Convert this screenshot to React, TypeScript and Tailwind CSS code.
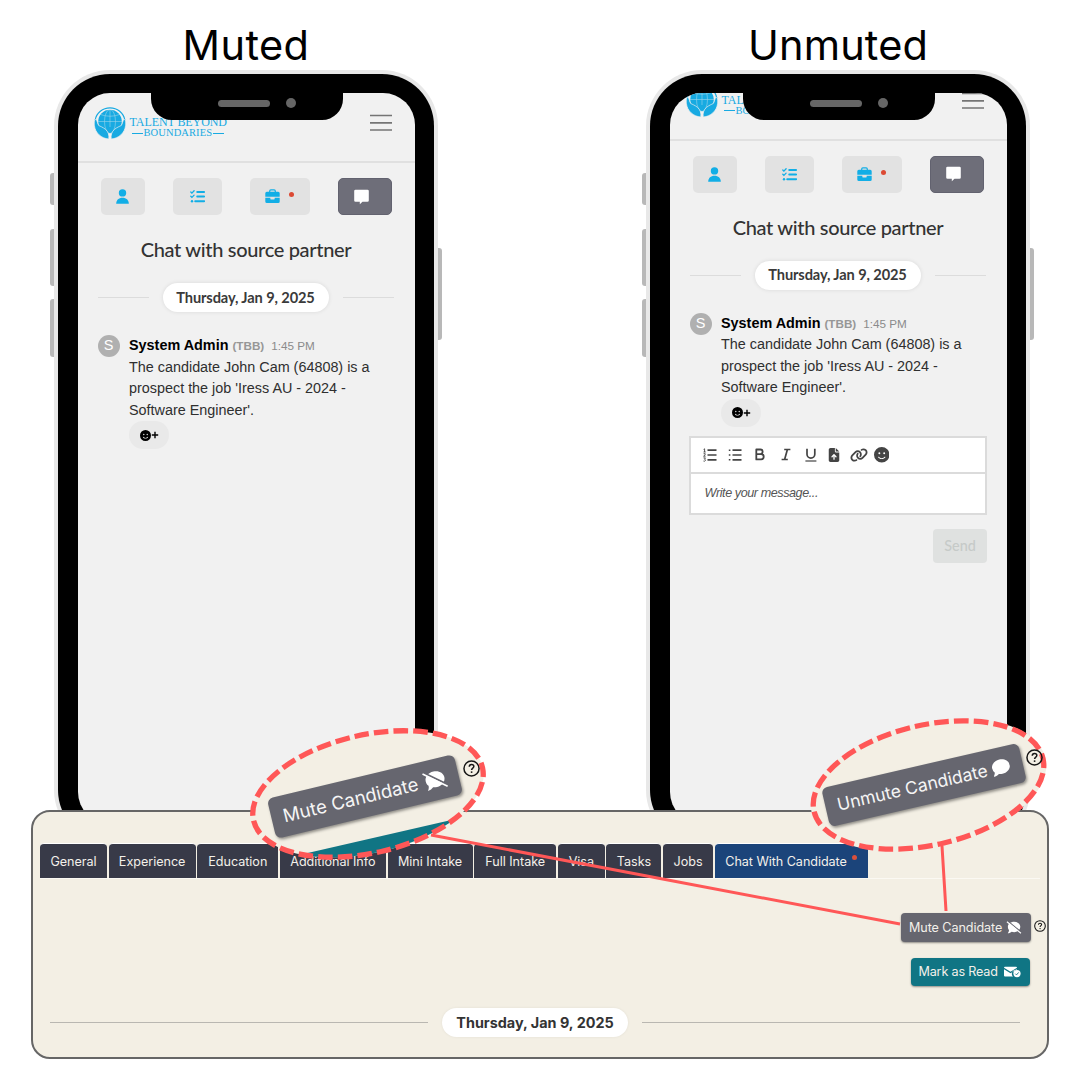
import React from "react";
import { FaLink, FaFaceSmile, FaFileArrowUp, FaComment } from "react-icons/fa6";

function Logo() {
  return (
    <div className="flex items-start text-[#18aae2]">
      <svg width="32" height="33" viewBox="0 0 32 33" className="shrink-0">
        <path d="M1.200 13 A15 14.500 0 0 1 30.800 13" fill="none" stroke="#18aae2" strokeWidth="1.200" />
        <circle cx="16" cy="14.5" r="11.8" fill="#18aae2" />
        <g fill="none" stroke="#f1f1f1" strokeWidth="0.600" opacity="0.600">
          <ellipse cx="16" cy="14.5" rx="5.5" ry="12" />
          <path d="M16 2V20M4 14.5H28M6.5 7.5Q16 11 25.5 7.5" />
        </g>
        <path d="M1.800 12.500C.300 12.500 .100 15 .400 18.500C1.200 26 7.500 31.500 14.800 32C15.400 28 14 24.500 11.500 22.300C8.500 20 6.500 19.500 4.800 18.500C3.500 17.300 3.300 13 1.800 12.500Z" fill="#18aae2" stroke="#f1f1f1" strokeWidth="0.700" />
        <path d="M30.200 12.500C31.700 12.500 31.900 15 31.600 18.500C30.800 26 24.500 31.500 17.200 32C16.600 28 18 24.500 20.500 22.300C23.500 20 25.500 19.500 27.200 18.500C28.500 17.300 28.700 13 30.200 12.500Z" fill="#18aae2" stroke="#f1f1f1" strokeWidth="0.700" />
      </svg>
      <div className="ml-1 mt-[8px] w-[97px] font-['Liberation_Serif']">
        <div className="whitespace-nowrap text-[12px] leading-[14px] tracking-[-0.080px]">TALENT BEYOND</div>
        <div className="mt-[-2px] flex items-center whitespace-nowrap text-[10.500px] leading-[12px] tracking-[0.100px]">
          <span className="ml-[2px] mr-px h-px w-[11px] bg-[#18aae2]" />
          BOUNDARIES
          <span className="ml-px h-px w-[11px] bg-[#18aae2]" />
        </div>
      </div>
    </div>
  );
}

function NavTabs() {
  return (
    <div className="ml-[23px] mt-[15px] flex h-[37px] text-[#12aee6]">
      <div className="flex w-[44px] items-center justify-center rounded-[5px] bg-[#e2e2e2]">
        <svg width="13" height="15" viewBox="0 0 13 15" fill="currentColor">
          <circle cx="6.500" cy="3.900" r="3.700" />
          <path d="M.2 14.800C.2 11 2.800 8.800 6.500 8.800S12.800 11 12.800 14.800Z" />
        </svg>
      </div>
      <div className="ml-7 flex w-[49px] items-center justify-center rounded-[5px] bg-[#e2e2e2]">
        <svg width="15" height="13" viewBox="0 0 15 13" fill="none" stroke="currentColor" strokeLinecap="round">
          <path d="M7.200 2H14.200M7.200 6.500H14.200M5.200 11.200H14.200" strokeWidth="1.900" />
          <path d="M.8 2 1.900 3.100 4.100.8M.8 6.300 1.900 7.400 4.100 5.100" strokeWidth="1.300" />
          <circle cx="2" cy="11.200" r="1.200" fill="currentColor" stroke="none" />
        </svg>
      </div>
      <div className="ml-7 flex w-[60px] items-center rounded-[5px] bg-[#e2e2e2] pl-[15.500px]">
        <svg width="15" height="15" viewBox="0 0 15 15" fill="currentColor">
          <path d="M4.700 3.200V2A1.200 1.200 0 0 1 5.900.8H9.100A1.200 1.200 0 0 1 10.300 2V3.200" fill="none" stroke="currentColor" strokeWidth="1.200" />
          <path d="M1.800 2.800H13.200A1.500 1.500 0 0 1 14.700 4.300V7.700H.3V4.300A1.500 1.500 0 0 1 1.800 2.800Z" />
          <path d="M.3 8.700H5.300V9.400A1.200 1.200 0 0 0 6.500 10.600H8.500A1.200 1.200 0 0 0 9.700 9.400V8.700H14.700V12.600A1.500 1.500 0 0 1 13.200 14.100H1.800A1.500 1.500 0 0 1 .3 12.600Z" />
        </svg>
        <span className="mb-[4px] ml-[8.500px] size-[5px] rounded-full bg-[#dc4a34]" />
      </div>
      <div className="ml-7 flex w-[54px] items-center rounded-[5px] border border-[#62626f] bg-[#6e6e79] pl-[15px] text-white">
        <svg width="15" height="16" viewBox="0 0 15 16" fill="currentColor">
          <path d="M1.500 .8h12a1.300 1.300 0 0 1 1.300 1.300v9.400a1.300 1.300 0 0 1-1.300 1.300H8.500L5.800 15.300V12.800h-4.300A1.300 1.300 0 0 1 .2 11.500V2.100A1.300 1.300 0 0 1 1.500.8z" />
        </svg>
      </div>
    </div>
  );
}

function Message() {
  return (
    <div className="ml-[20px] mt-[23px] flex font-['Liberation_Sans']">
      <div className="flex size-[22px] items-center justify-center rounded-full bg-[#b0b0b0] text-[14.500px] text-white">S</div>
      <div className="ml-[9.500px] whitespace-nowrap text-[14.380px] leading-[21.600px] text-[#2f2f2f]">
        <div className="flex items-baseline">
          <span className="text-[14.400px] font-bold text-black">System Admin</span>
          <span className="ml-[4px] text-[11.700px] font-bold text-[#979797]">(TBB)</span>
          <span className="ml-[7px] text-[11.700px] text-[#8b8b8b]">1:45 PM</span>
        </div>
        <div>The candidate John Cam (64808) is a</div>
        <div>prospect the job 'Iress AU - 2024 -</div>
        <div>Software Engineer'.</div>
        <div className="flex h-[28px] w-[40px] items-center rounded-full bg-[#e9e9e9] pl-[10.500px] text-black">
          <FaFaceSmile className="size-[11px]" />
          <svg width="8" height="8" viewBox="0 0 8 8" className="ml-[0.500px]">
            <path d="M4 .8V7.200M.8 4H7.200" stroke="currentColor" strokeWidth="1.400" />
          </svg>
        </div>
      </div>
    </div>
  );
}

function EditorIcons() {
  return (
    <>
      <svg width="14" height="14" viewBox="0 0 14 14" fill="none" stroke="currentColor">
        <path d="M4.500 2.200H13.500M4.500 7H13.500M4.500 11.800H13.500" strokeWidth="1.700" />
        <path d="M.6 1.400 1.600.8V4M.5 4H2.700M.6 5.700H2.200V6.700L.6 8.200H2.600M.5 9.900H2.400L1.600 11.300Q2.700 11.500 2.300 12.600T.5 13" strokeWidth="0.900" />
      </svg>
      <svg width="14" height="14" viewBox="0 0 14 14" fill="none" stroke="currentColor" className="ml-[11px]">
        <path d="M4.500 2.200H13.500M4.500 7H13.500M4.500 11.800H13.500" strokeWidth="1.700" />
        <path d="M.8 2.200H2.400M.8 7H2.400M.8 11.800H2.400" strokeWidth="1.500" />
      </svg>
      <svg width="10" height="13" viewBox="0 0 10 13" fill="none" stroke="currentColor" strokeWidth="1.800" className="ml-[13px]">
        <path d="M1.300 1.500H5.300A2.350 2.350 0 0 1 5.300 6.200H1.300ZM1.300 6.200H6.100A2.600 2.600 0 0 1 6.100 11.400H1.300Z" strokeLinejoin="round" />
      </svg>
      <svg width="10" height="13" viewBox="0 0 10 13" fill="none" stroke="currentColor" strokeWidth="1.700" className="ml-[16px]">
        <path d="M3.200 1.500H9.400M.6 11.500H6.800M6.400 1.500 3.600 11.500" />
      </svg>
      <svg width="12" height="14" viewBox="0 0 12 14" fill="none" stroke="currentColor" className="ml-[14px]">
        <path d="M2 .8V6.200A3.500 3.500 0 0 0 9.800 6.200V.8" strokeWidth="1.700" />
        <path d="M.4 13H11.400" strokeWidth="1.200" />
      </svg>
      <FaFileArrowUp className="ml-[10px] size-[14px]" />
      <FaLink className="ml-[8.500px] size-[18px]" />
      <FaFaceSmile className="ml-[6px] size-[15.500px]" />
    </>
  );
}

function Composer() {
  return (
    <div className="ml-[19.500px] mt-[9px] w-[298px]">
      <div className="border-2 border-[#dbdbdb] bg-white">
        <div className="flex h-[36px] items-center border-b-2 border-[#dbdbdb] pl-[12px] text-[#444]">
          <EditorIcons />
        </div>
        <div className="flex h-[39px] items-center pl-[13.500px] font-['Liberation_Sans'] text-[12.600px] italic tracking-[-0.430px] text-[#555]">Write your message...</div>
      </div>
      <div className="ml-auto mt-[14px] flex h-[34px] w-[54px] items-center justify-center rounded-[4px] bg-[#dfe1e0] font-['Lato'] text-[14.400px] font-medium text-[#c6cac8]">Send</div>
    </div>
  );
}

function Phone({ scrolled }: { scrolled?: boolean }) {
  return (
    <div className="relative h-[776px] w-[384px] shrink-0">
      <span className="absolute left-[-4px] top-[103px] h-[32px] w-[8px] rounded-l-[3px] bg-[#b8b8b8]" />
      <span className="absolute left-[-4px] top-[159px] h-[57px] w-[8px] rounded-l-[3px] bg-[#b8b8b8]" />
      <span className="absolute left-[-4px] top-[229px] h-[58px] w-[8px] rounded-l-[3px] bg-[#b8b8b8]" />
      <span className="absolute right-[-4px] top-[178px] h-[92px] w-[8px] rounded-r-[3px] bg-[#b8b8b8]" />
      <div className="relative h-full rounded-[56px] bg-[#e8e8e8] p-[4px]">
        <div className="h-full rounded-[52px] bg-black px-[19.500px] pb-[18px] pt-[19px]">
          <div className="h-full overflow-hidden rounded-[32px] bg-[#f1f1f1]">
            <div className={scrolled ? "-mt-[22.500px]" : ""}>
              <div className="flex h-[70px] items-start justify-between border-b-2 border-[#e0e0e0] pl-[16px] pr-[23px] pt-[14px]">
                <Logo />
                <svg width="22" height="18" viewBox="0 0 22 18" className="mt-[7px]">
                  <path d="M0 1.500H22M0 8.800H22M0 16H22" stroke="#757575" strokeWidth="1.700" />
                </svg>
              </div>
              <NavTabs />
              <div className="mt-[20px] text-center font-['Lato'] text-[20px] font-medium leading-[28px] tracking-[-0.330px] text-[#333]">Chat with source partner</div>
              <div className="ml-[20px] mt-[20px] flex items-center">
                <span className="h-px w-[51px] bg-[#dcdcdc]" />
                <span className="ml-[14px] flex h-[29px] w-[166px] items-center justify-center rounded-full bg-white font-['Lato'] text-[14.600px] font-bold tracking-[-0.100px] text-[#3a3a3a] shadow-[0_0_4px_#0000001a]">
                  Thursday, Jan 9, 2025
                </span>
                <span className="ml-[14px] h-px w-[51px] bg-[#dcdcdc]" />
              </div>
              <Message />
              {scrolled && <Composer />}
            </div>
          </div>
        </div>
        <div className="absolute left-[96.500px] top-[22px] flex h-[28px] w-[192.500px] rounded-b-[21px] bg-black">
          <span className="ml-[67.500px] mt-[8px] h-[7px] w-[52px] rounded-full bg-[#666]" />
          <span className="ml-[16px] mt-[6px] size-[10px] rounded-full bg-[#666]" />
        </div>
      </div>
    </div>
  );
}

function HelpIcon({ className }: { className: string }) {
  return (
    <svg viewBox="0 0 16 16" className={className} fill="none" stroke="#161616">
      <circle cx="8" cy="8" r="7.100" strokeWidth="1.400" />
      <path d="M5.900 6.400C5.900 5 6.800 4.200 8.050 4.200S10.200 5 10.200 6.100C10.200 7.600 8.100 7.600 8.100 9.300" strokeWidth="1.400" />
      <circle cx="8.100" cy="11.400" r="0.900" fill="#161616" stroke="none" />
    </svg>
  );
}

function MutedBubble({ className }: { className: string }) {
  return (
    <svg viewBox="0 0 16 14" className={className}>
      <path d="M8.200 .8C12 .8 14.800 3.200 14.800 6.300S12 12 8.200 12C7.200 12 6.300 11.800 5.500 11.500C4.500 12.300 3.100 13.200 1.300 13.200C2.200 12.100 2.700 10.900 2.600 9.700C1.700 8.700 1.400 7.600 1.400 6.300C1.400 3.200 4.400 .8 8.200 .8Z" fill="#fff" />
      <path d="M1.300 .1L16 12.100" stroke="#66666f" strokeWidth="1.300" />
      <path d="M.4 .8L15.500 13.200" stroke="#fff" strokeWidth="1.200" />
    </svg>
  );
}

function MailCheck() {
  return (
    <svg width="17" height="12" viewBox="0 0 17 12" fill="#fff">
      <path d="M1 .8H12a1 1 0 0 1 1 1L6.500 5.800 0 1.800a1 1 0 0 1 1-1zM0 3.200 6.500 7.200 13 3.200V4A4 4 0 0 0 9 10.600H1a1 1 0 0 1-1-1z" />
      <circle cx="13" cy="7.600" r="3.600" />
      <path d="M11.300 7.700l1.200 1.200 2.200-2.500" fill="none" stroke="#107584" strokeWidth="0.900" />
    </svg>
  );
}

const tabs = [
  { label: "General", width: "w-[67px]" },
  { label: "Experience", width: "w-[87px]" },
  { label: "Education", width: "w-[81px]" },
  { label: "Additional Info", width: "w-[106px]" },
  { label: "Mini Intake", width: "w-[85px]" },
  { label: "Full Intake", width: "w-[82px]" },
  { label: "Visa", width: "w-[47px]" },
  { label: "Tasks", width: "w-[55px]" },
  { label: "Jobs", width: "w-[50px]" },
];

function Panel() {
  return (
    <div className="relative ml-[31px] h-[249px] w-[1018px] rounded-[19px] border-2 border-[#666] bg-[#f3efe4] pt-[31px] font-['Inter'] text-[12.600px] text-[#f3f0ea]">
      <div className="ml-[7px] flex h-[36px] w-[1000px] gap-[1.650px] border-b border-[#fbf9f3]">
        {tabs.map((t) => (
          <div key={t.label} className={`${t.width} flex shrink-0 items-center justify-center whitespace-nowrap rounded-t-[4px] border-t border-white bg-[#383a48] pt-[2px] tracking-[-0.020px]`}>
            {t.label}
          </div>
        ))}
        <div className="flex w-[153px] shrink-0 items-center whitespace-nowrap rounded-t-[4px] border-t border-white bg-[#1b447a] pl-[10.500px] pt-[2px] tracking-[-0.050px]">
          Chat With Candidate
          <span className="mb-[9px] ml-[5px] size-[5px] rounded-full bg-[#d8503c]" />
        </div>
      </div>
      <div className="mt-[34px] flex items-center justify-end pr-px">
        <div className="flex h-[29px] w-[130px] items-center rounded-[4px] bg-[#66666f] pl-2 shadow-[0_1px_2px_#0006]">
          <span className="whitespace-nowrap pt-px tracking-[-0.070px]">Mute Candidate</span>
          <MutedBubble className="ml-[4px] h-[13px] w-[16px]" />
        </div>
        <HelpIcon className="mb-[3px] ml-[3px] size-[12px]" />
      </div>
      <div className="ml-auto mr-[17px] mt-[16px] flex h-[28px] w-[119px] items-center rounded-[4px] bg-[#107584] pl-[7.500px] shadow-[0_1px_2px_#0006]">
        <span className="mr-[6.500px] whitespace-nowrap pt-px tracking-[-0.170px]">Mark as Read</span>
        <MailCheck />
      </div>
      <div className="ml-[17px] mt-[22px] flex items-center">
        <span className="h-px w-[378px] bg-[#b9b7b1]" />
        <span className="ml-[14px] flex h-[29px] w-[186px] items-center justify-center rounded-full bg-white pt-px text-[14.400px] font-bold text-[#333] shadow-[0_0_3px_#0001]">Thursday, Jan 9, 2025</span>
        <span className="ml-[14px] h-px w-[378px] bg-[#b9b7b1]" />
      </div>
    </div>
  );
}

function DashedRing({ ry }: { ry: number }) {
  return (
    <ellipse cx="0" cy="0" rx="117.500" ry={ry} fill="none" stroke="#ff5757" strokeWidth="5.300" pathLength="29" strokeDasharray="0.740 0.260" strokeDashoffset="0.256" />
  );
}

export default function App() {
  return (
    <div className="relative h-[1080px] w-[1080px] overflow-hidden bg-white">
      <div className="flex h-[70px] pt-[17px] font-['Inter'] text-[41.500px] font-[380] leading-[56px] text-black">
        <div className="ml-[54px] w-[384px] text-center tracking-[0.400px]">Muted</div>
        <div className="ml-[208px] w-[384px] text-center tracking-[0.150px]">Unmuted</div>
      </div>
      <div className="flex h-[740px] gap-[208px] pl-[54px]">
        <Phone />
        <Phone scrolled />
      </div>
      <Panel />

      <svg className="pointer-events-none absolute inset-0" width="1080" height="1080" viewBox="0 0 1080 1080">
        <defs>
          <clipPath id="callout">
            <ellipse cx="0" cy="0" rx="118" ry="59" />
          </clipPath>
        </defs>
        <path d="M431 835L900 924M942 846L946 911" stroke="#ff5757" strokeWidth="3" />
        <g transform="translate(368 794) rotate(-13)">
          <ellipse cx="0" cy="0" rx="118" ry="59" fill="#f3efe4" />
          <rect x="-90" y="44" width="200" height="40" fill="#107584" clipPath="url(#callout)" />
          <DashedRing ry={59} />
        </g>
        <g transform="translate(928.500 785) rotate(-13)">
          <ellipse cx="0" cy="0" rx="120" ry="62" fill="#f3efe4" />
          <DashedRing ry={60} />
        </g>
      </svg>
      <div className="absolute left-[269px] top-[776px] flex h-[41px] w-[192px] rotate-[-13.500deg] items-center rounded-[6px] bg-[#66666f] pl-[12px] font-['Inter'] text-[18.500px] text-[#f5f5f5] shadow-[1px_2px_3px_#0006]">
        <span className="whitespace-nowrap">Mute Candidate</span>
        <MutedBubble className="ml-[5px] h-[20px] w-[24px]" />
      </div>
      <HelpIcon className="absolute left-[463px] top-[760px] size-[17px]" />
      <div className="absolute left-[823px] top-[764.500px] flex h-[39.500px] w-[202px] rotate-[-13deg] items-center rounded-[6px] bg-[#66666f] pl-[12px] font-['Inter'] text-[17.500px] text-[#f5f5f5] shadow-[1px_2px_3px_#0006]">
        <span className="whitespace-nowrap">Unmute Candidate</span>
        <FaComment className="ml-[5px] size-[18px] text-white" />
      </div>
      <HelpIcon className="absolute left-[1026px] top-[749px] size-[17px]" />
    </div>
  );
}
